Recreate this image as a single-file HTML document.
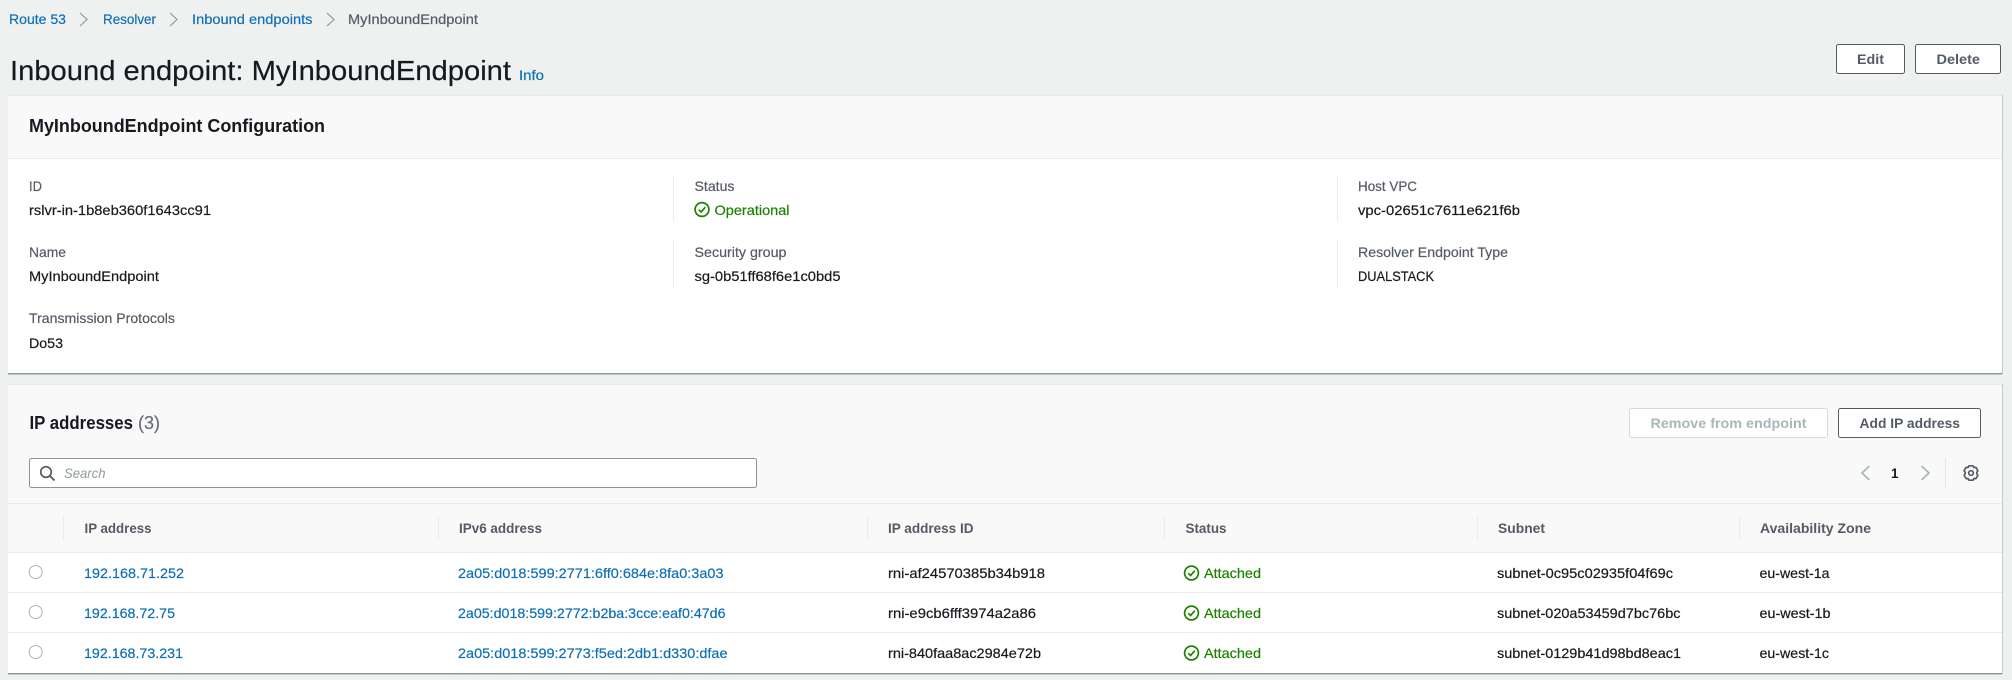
<!DOCTYPE html>
<html lang="en">
<head>
<meta charset="utf-8">
<title>Inbound endpoint: MyInboundEndpoint</title>
<style>
html,body{margin:0;padding:0;width:2012px;height:680px;overflow:hidden;background:#eff1f1}
svg{display:block;position:absolute;left:0;top:0}
text{font-family:"Liberation Sans",sans-serif;font-size:14px;fill:#16191f;stroke:#16191f;stroke-width:.2px;white-space:pre}
.l{fill:#545b64;stroke:#545b64}
.a{fill:#0f6fb5;stroke:#0f6fb5;font-weight:400}
.g{fill:#1d8102;stroke:#1d8102;font-weight:400}
.h{font-size:14px;font-weight:700;fill:#545b64;stroke:none}
.t{font-size:18px;font-weight:700;fill:#16191f;stroke:none}
.btn{font-weight:700;fill:#545b64;font-size:14px;stroke:none}
.sep{stroke:#eaeded;stroke-width:1}
</style>
</head>
<body>
<svg width="2012" height="680" viewBox="0 0 2012 680" xmlns="http://www.w3.org/2000/svg">
<defs>
<g id="ok" fill="none" stroke="#1d8102">
<circle cx="0" cy="0" r="6.9" stroke-width="1.7"/>
<path d="M-3.2 0.2 L-0.9 2.5 L3.3 -2.3" stroke-width="1.7"/>
</g>
</defs>
<rect width="2012" height="680" fill="#eff1f1"/>

<!-- Breadcrumb -->
<text x="9" y="24" class="a" textLength="57" lengthAdjust="spacingAndGlyphs">Route 53</text>
<path d="M80 13 L87 19.500 L80 26" fill="none" stroke="#879596" stroke-width="1.1"/>
<text x="103" y="24" class="a" textLength="53" lengthAdjust="spacingAndGlyphs">Resolver</text>
<path d="M170 13 L177 19.500 L170 26" fill="none" stroke="#879596" stroke-width="1.1"/>
<text x="192" y="24" class="a" textLength="120.500" lengthAdjust="spacingAndGlyphs">Inbound endpoints</text>
<path d="M327 13 L334 19.500 L327 26" fill="none" stroke="#879596" stroke-width="1.1"/>
<text x="348" y="24" class="l" textLength="130" lengthAdjust="spacingAndGlyphs">MyInboundEndpoint</text>

<!-- Title -->
<text x="10" y="80" style="font-size:28px" textLength="501" lengthAdjust="spacingAndGlyphs">Inbound endpoint: MyInboundEndpoint</text>
<text x="519" y="80" class="a" textLength="25" lengthAdjust="spacingAndGlyphs">Info</text>

<!-- Header buttons -->
<rect x="1836.500" y="44.500" width="68" height="29" rx="2" fill="#fff" stroke="#545b64"/>
<text x="1857" y="64" class="btn" textLength="27" lengthAdjust="spacingAndGlyphs">Edit</text>
<rect x="1915.500" y="44.500" width="85" height="29" rx="2" fill="#fff" stroke="#545b64"/>
<text x="1936.500" y="64" class="btn" textLength="43.500" lengthAdjust="spacingAndGlyphs">Delete</text>

<!-- Card 1 -->
<rect x="9" y="95" width="1994" height="279" fill="#c6cccc"/>
<rect x="8" y="95" width="1994" height="278" fill="#fff"/>
<rect x="8" y="95" width="1994" height="63" fill="#f9f9f9"/>
<rect x="8" y="95" width="1994" height="1" fill="#e9ebeb"/>
<rect x="8" y="158" width="1994" height="1" fill="#eaeded"/>
<rect x="8" y="373" width="1994" height="1.500" fill="#8d9a9b"/>
<text x="29" y="132" class="t" textLength="296" lengthAdjust="spacingAndGlyphs">MyInboundEndpoint Configuration</text>

<path class="sep" d="M673.500 175V221M673.500 241V287M1337.500 175V221M1337.500 241V287"/>

<text x="29" y="191" class="l" textLength="13" lengthAdjust="spacingAndGlyphs">ID</text>
<text x="29" y="215" textLength="182" lengthAdjust="spacingAndGlyphs">rslvr-in-1b8eb360f1643cc91</text>
<text x="29" y="257" class="l" textLength="37" lengthAdjust="spacingAndGlyphs">Name</text>
<text x="29" y="281" textLength="130" lengthAdjust="spacingAndGlyphs">MyInboundEndpoint</text>
<text x="29" y="323" class="l" textLength="146" lengthAdjust="spacingAndGlyphs">Transmission Protocols</text>
<text x="29" y="348" textLength="34" lengthAdjust="spacingAndGlyphs">Do53</text>

<text x="694.500" y="191" class="l" textLength="40" lengthAdjust="spacingAndGlyphs">Status</text>
<use href="#ok" x="702" y="209.500"/>
<text x="714.500" y="215" class="g" textLength="75" lengthAdjust="spacingAndGlyphs">Operational</text>
<text x="694.500" y="257" class="l" textLength="92" lengthAdjust="spacingAndGlyphs">Security group</text>
<text x="694.500" y="281" textLength="146" lengthAdjust="spacingAndGlyphs">sg-0b51ff68f6e1c0bd5</text>

<text x="1358" y="191" class="l" textLength="59" lengthAdjust="spacingAndGlyphs">Host VPC</text>
<text x="1358" y="215" textLength="162" lengthAdjust="spacingAndGlyphs">vpc-02651c7611e621f6b</text>
<text x="1358" y="257" class="l" textLength="150" lengthAdjust="spacingAndGlyphs">Resolver Endpoint Type</text>
<text x="1358" y="281" textLength="76" lengthAdjust="spacingAndGlyphs">DUALSTACK</text>

<!-- Card 2 -->
<rect x="9" y="384" width="1994" height="290" fill="#c6cccc"/>
<rect x="8" y="384" width="1994" height="289" fill="#fff"/>
<rect x="8" y="384" width="1994" height="168" fill="#f9f9f9"/>
<rect x="8" y="384" width="1994" height="1" fill="#e9ebeb"/>
<rect x="8" y="673" width="1994" height="1.500" fill="#8d9a9b"/>

<text x="29.500" y="429" class="t" textLength="103.500" lengthAdjust="spacingAndGlyphs">IP addresses</text>
<text x="138" y="429" style="font-size:18px;fill:#687078;stroke:#687078" textLength="22" lengthAdjust="spacingAndGlyphs">(3)</text>

<rect x="1629.500" y="408.500" width="198" height="29" rx="2" fill="#fff" stroke="#d5dbdb"/>
<text x="1650.500" y="428" class="btn" style="fill:#aab7b8" textLength="156" lengthAdjust="spacingAndGlyphs">Remove from endpoint</text>
<rect x="1838.500" y="408.500" width="142" height="29" rx="2" fill="#fff" stroke="#545b64"/>
<text x="1859.500" y="428" class="btn" textLength="100.500" lengthAdjust="spacingAndGlyphs">Add IP address</text>

<rect x="29.500" y="458.500" width="727" height="29" rx="2" fill="#fff" stroke="#879596"/>
<circle cx="46" cy="472" r="5.300" fill="none" stroke="#545b64" stroke-width="1.700"/>
<path d="M50 476 L54.500 480.500" stroke="#545b64" stroke-width="1.900" fill="none"/>
<text x="64" y="478" style="font-style:italic;fill:#8f9c9d;stroke:none" textLength="41.500" lengthAdjust="spacingAndGlyphs">Search</text>

<path d="M1869.500 466 L1862 473 L1869.500 480" fill="none" stroke="#aab7b8" stroke-width="1.700"/>
<text x="1891" y="478" style="font-weight:700;stroke:none" textLength="7.500" lengthAdjust="spacingAndGlyphs">1</text>
<path d="M1921.500 466 L1929 473 L1921.500 480" fill="none" stroke="#aab7b8" stroke-width="1.700"/>
<path d="M1945.500 458V488" stroke="#e3e6e6"/>
<g transform="translate(1971,473)" fill="none" stroke="#545b64">
<path d="M-2 -7.200 L2 -7.200 L2.900 -5.500 L4.800 -5.700 L6.900 -2.300 L5.800 -0.700 L5.800 0.700 L6.900 2.300 L4.800 5.700 L2.900 5.500 L2 7.200 L-2 7.200 L-2.900 5.500 L-4.800 5.700 L-6.900 2.300 L-5.800 0.700 L-5.800 -0.700 L-6.900 -2.300 L-4.800 -5.700 L-2.900 -5.500 Z" stroke-width="1.700" stroke-linejoin="round"/>
<circle r="2.300" stroke-width="1.700"/>
</g>

<!-- Table header -->
<rect x="8" y="503" width="1994" height="1" fill="#eaeded"/>
<rect x="8" y="552" width="1994" height="1" fill="#eaeded"/>
<path class="sep" d="M63.500 516V540M438.500 516V540M867.500 516V540M1164.500 516V540M1477.500 516V540M1739.500 516V540"/>
<text x="84.500" y="533" class="h" textLength="67" lengthAdjust="spacingAndGlyphs">IP address</text>
<text x="459" y="533" class="h" textLength="83" lengthAdjust="spacingAndGlyphs">IPv6 address</text>
<text x="888" y="533" class="h" textLength="85.500" lengthAdjust="spacingAndGlyphs">IP address ID</text>
<text x="1185.500" y="533" class="h" textLength="41" lengthAdjust="spacingAndGlyphs">Status</text>
<text x="1498" y="533" class="h" textLength="47" lengthAdjust="spacingAndGlyphs">Subnet</text>
<text x="1760" y="533" class="h" textLength="111" lengthAdjust="spacingAndGlyphs">Availability Zone</text>

<!-- Rows -->
<rect x="8" y="592" width="1994" height="1" fill="#eaeded"/>
<rect x="8" y="632" width="1994" height="1" fill="#eaeded"/>

<g fill="#fff" stroke="#aab7b8" stroke-width="1">
<circle cx="35.700" cy="572" r="6.500"/>
<circle cx="35.700" cy="612" r="6.500"/>
<circle cx="35.700" cy="652" r="6.500"/>
</g>

<text x="84" y="578" class="a" textLength="100" lengthAdjust="spacingAndGlyphs">192.168.71.252</text>
<text x="458" y="578" class="a" textLength="265.500" lengthAdjust="spacingAndGlyphs">2a05:d018:599:2771:6ff0:684e:8fa0:3a03</text>
<text x="888" y="578" textLength="157" lengthAdjust="spacingAndGlyphs">rni-af24570385b34b918</text>
<use href="#ok" x="1191.500" y="573"/>
<text x="1204" y="578" class="g" textLength="57" lengthAdjust="spacingAndGlyphs">Attached</text>
<text x="1497" y="578" textLength="176" lengthAdjust="spacingAndGlyphs">subnet-0c95c02935f04f69c</text>
<text x="1759.500" y="578" textLength="70" lengthAdjust="spacingAndGlyphs">eu-west-1a</text>

<text x="84" y="618" class="a" textLength="91" lengthAdjust="spacingAndGlyphs">192.168.72.75</text>
<text x="458" y="618" class="a" textLength="267.500" lengthAdjust="spacingAndGlyphs">2a05:d018:599:2772:b2ba:3cce:eaf0:47d6</text>
<text x="888" y="618" textLength="148" lengthAdjust="spacingAndGlyphs">rni-e9cb6fff3974a2a86</text>
<use href="#ok" x="1191.500" y="613"/>
<text x="1204" y="618" class="g" textLength="57" lengthAdjust="spacingAndGlyphs">Attached</text>
<text x="1497" y="618" textLength="183.500" lengthAdjust="spacingAndGlyphs">subnet-020a53459d7bc76bc</text>
<text x="1759.500" y="618" textLength="71" lengthAdjust="spacingAndGlyphs">eu-west-1b</text>

<text x="84" y="658" class="a" textLength="99" lengthAdjust="spacingAndGlyphs">192.168.73.231</text>
<text x="458" y="658" class="a" textLength="269.500" lengthAdjust="spacingAndGlyphs">2a05:d018:599:2773:f5ed:2db1:d330:dfae</text>
<text x="888" y="658" textLength="153" lengthAdjust="spacingAndGlyphs">rni-840faa8ac2984e72b</text>
<use href="#ok" x="1191.500" y="653"/>
<text x="1204" y="658" class="g" textLength="57" lengthAdjust="spacingAndGlyphs">Attached</text>
<text x="1497" y="658" textLength="184" lengthAdjust="spacingAndGlyphs">subnet-0129b41d98bd8eac1</text>
<text x="1759.500" y="658" textLength="69.500" lengthAdjust="spacingAndGlyphs">eu-west-1c</text>
</svg>
</body>
</html>
